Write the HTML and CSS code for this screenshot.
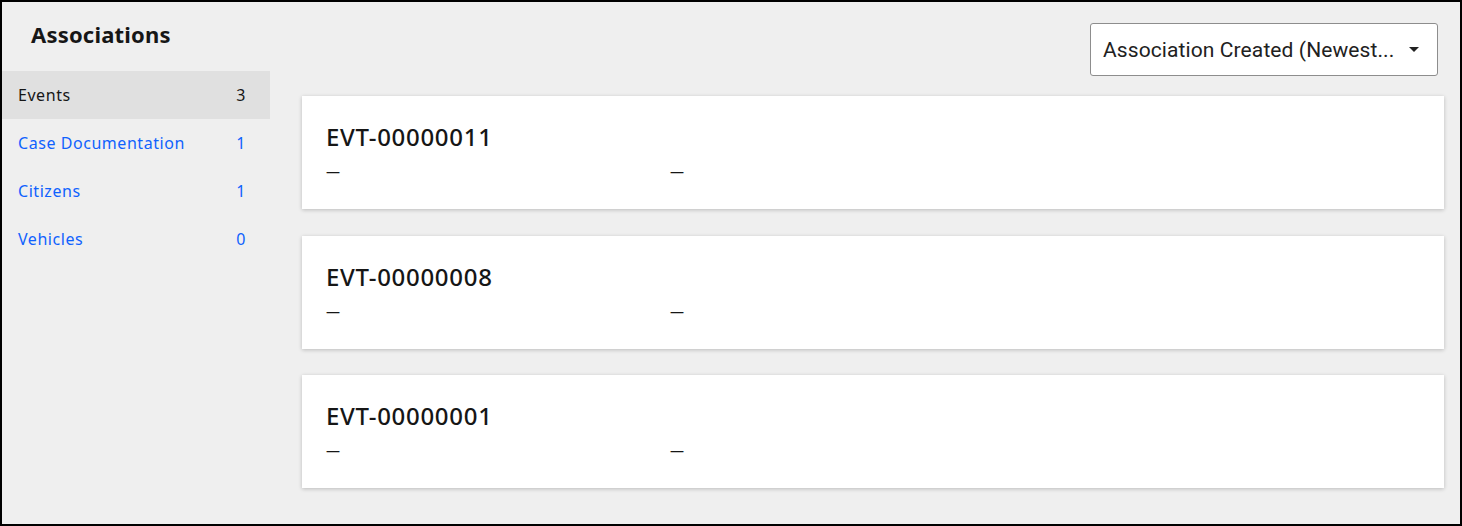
FILE: index.html
```html
<!DOCTYPE html>
<html>
<head>
<meta charset="utf-8">
<link rel="stylesheet" href="styles.css">
</head>
<body>
<div class="frame">
  <aside class="sidebar">
    <h2 class="title">Associations</h2>
    <ul class="nav">
      <li class="nav-item active"><span>Events</span><span>3</span></li>
      <li class="nav-item"><span>Case Documentation</span><span>1</span></li>
      <li class="nav-item"><span>Citizens</span><span>1</span></li>
      <li class="nav-item"><span>Vehicles</span><span>0</span></li>
    </ul>
  </aside>
  <main class="main">
    <div class="toolbar">
      <div class="select">
        <span class="select-text">Association Created (Newest...</span>
        <svg class="caret" width="10" height="5" viewBox="0 0 10 5"><path d="M0 0h10L5 5z" fill="#212121"/></svg>
      </div>
    </div>
    <div class="cards">
      <div class="card">
        <div class="card-title">EVT-00000011</div>
        <div class="card-fields"><span>—</span><span>—</span></div>
      </div>
      <div class="card">
        <div class="card-title">EVT-00000008</div>
        <div class="card-fields"><span>—</span><span>—</span></div>
      </div>
      <div class="card">
        <div class="card-title">EVT-00000001</div>
        <div class="card-fields"><span>—</span><span>—</span></div>
      </div>
    </div>
  </main>
</div>
</body>
</html>
```
FILE: styles.css
```css
html, body {
  margin: 0;
  padding: 0;
}
body {
  font-family: "Noto Sans", "Open Sans", sans-serif;
  color: #161616;
}
.frame {
  box-sizing: border-box;
  width: 1462px;
  height: 526px;
  border: 2px solid #000;
  background: #efefef;
  display: flex;
}
.sidebar {
  width: 268px;
  flex: none;
}
.title {
  margin: 0;
  padding: 17px 0 0 29px;
  height: 50px;
  box-sizing: border-box;
  font-size: 22px;
  font-weight: 700;
  line-height: 30px;
  letter-spacing: 0.2px;
}
.nav {
  list-style: none;
  margin: 19px 0 0 0;
  padding: 0;
}
.nav-item {
  height: 48px;
  display: flex;
  align-items: center;
  justify-content: space-between;
  padding: 0 24px 0 16px;
  font-size: 16px;
  letter-spacing: 0.55px;
  color: #0f62fe;
}
.nav-item.active {
  background: #e0e0e0;
  color: #161616;
}
.main {
  flex: 1;
  padding: 21px 16px 0 32px;
}
.toolbar {
  display: flex;
  justify-content: flex-end;
  padding-right: 6px;
}
.select {
  box-sizing: border-box;
  width: 348px;
  height: 53px;
  background: #fff;
  border: 1px solid #8d8d8d;
  border-radius: 3px;
  display: flex;
  align-items: center;
  justify-content: space-between;
  padding: 0 18px 0 12px;
  font-family: Roboto, sans-serif;
  font-size: 21px;
  letter-spacing: 0.1px;
  color: #212121;
}
.cards {
  margin-top: 20px;
  display: flex;
  flex-direction: column;
  gap: 26.5px;
}
.card {
  height: 113px;
  box-sizing: border-box;
  background: #fff;
  box-shadow: 0 1px 4px rgba(0, 0, 0, 0.22);
  padding: 26px 24px 0 24px;
}
.card-title {
  font-size: 24px;
  line-height: 30px;
  font-weight: 500;
  letter-spacing: 0.7px;
}
.card-fields {
  display: grid;
  grid-template-columns: 344px 344px;
  font-size: 14px;
  line-height: 20px;
  margin-top: 10px;
}
```
